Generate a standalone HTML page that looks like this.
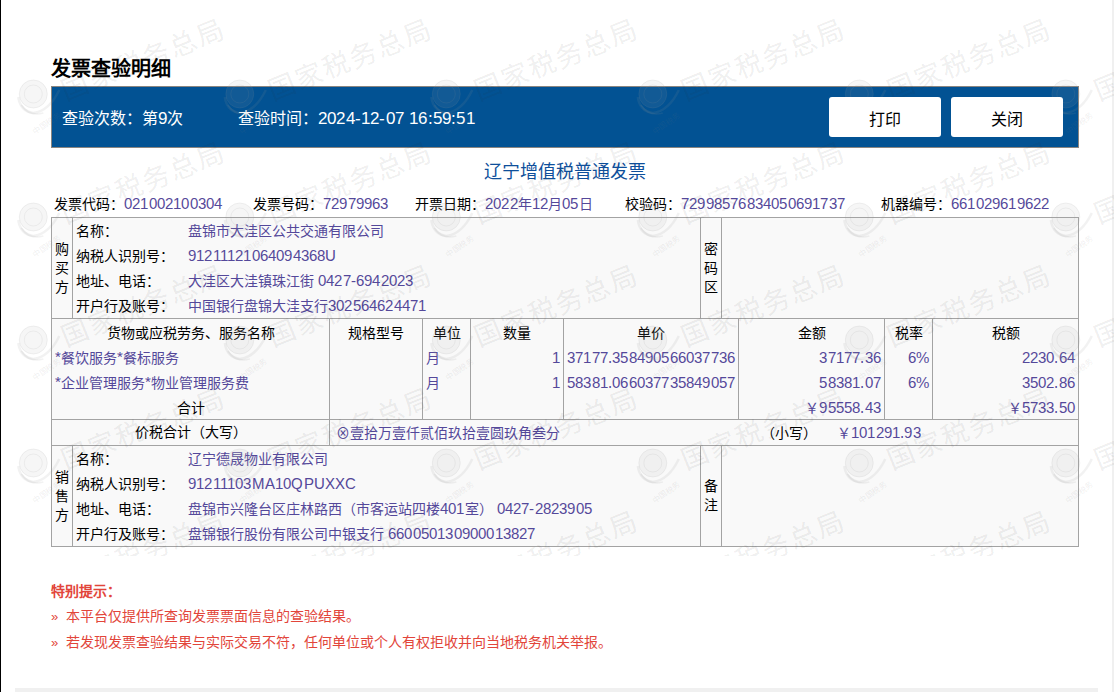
<!DOCTYPE html>
<html lang="zh-CN"><head><meta charset="utf-8">
<style>
@font-face{font-family:"LS";src:local("Liberation Sans");unicode-range:U+0020-007E,U+00A0-00BF;size-adjust:105%}
@font-face{font-family:"LS";font-weight:bold;src:local("Liberation Sans Bold");unicode-range:U+0020-007E,U+00A0-00BF;size-adjust:105%}
*{box-sizing:border-box}
html,body{margin:0;padding:0;width:1114px;height:692px;overflow:hidden;background:#fff;font-family:"LS","Liberation Sans",sans-serif;color:#333}
.abs{position:absolute}
#lline{left:0;top:0;width:1px;height:692px;background:#000}
#rstrip{left:1112px;top:0;width:2px;height:692px;background:#f0f0f0}
#bstrip{left:15px;top:688px;width:1083px;height:4px;background:#f0f0f0}
#title{left:51px;top:55px;font-size:20px;font-weight:bold;color:#000;line-height:28px;white-space:nowrap}
#bar{left:51px;top:86px;width:1028px;height:62px;background:#025293;border:1px solid #8a8580}
.bt{color:#fff;font-size:16px;line-height:20px;top:22px;white-space:nowrap}
.btn{z-index:2;top:10px;width:112px;height:40px;background:#fff;border-radius:3px;color:#000;font-size:16px;line-height:45px;text-align:center}
#ititle{left:51px;top:160px;width:1028px;text-align:center;font-size:18px;line-height:24px;color:#0e4f9b}
.info{top:195px;font-size:14px;line-height:18px;white-space:nowrap;color:#000}
.v{color:#54489a}
.n{letter-spacing:0.2px}
table{position:absolute;left:51px;border-collapse:collapse;table-layout:fixed;background:#f9f9f9;font-size:14px;color:#000}
td{border:1px solid #a3a3a3;padding:0;white-space:nowrap;vertical-align:top}
.vt{text-align:center;line-height:19px;vertical-align:middle;white-space:normal;word-break:break-all}
.row{height:25px;line-height:25px;padding-left:3px}
.r{text-align:right;padding-right:3px}
.c{text-align:center;padding-left:0}
.g .row{position:relative;top:2px}
.p .row{position:relative;top:1px}
.t .row{top:1px}
#notes{left:51px;top:579px;font-size:14px;color:#e2453a;line-height:25px;white-space:nowrap}
</style></head><body>
<div id="lline" class="abs"></div>
<div id="rstrip" class="abs"></div>
<div id="bstrip" class="abs"></div>
<div id="title" class="abs">发票查验明细</div>
<div id="bar" class="abs">
  <div class="abs bt" style="left:10px">查验次数：第<span class="n">9</span>次</div>
  <div class="abs bt" style="left:186px">查验时间：<span class="n">2024-12-07 16:59:51</span></div>
  <div class="abs btn" style="left:777px">打印</div>
  <div class="abs btn" style="left:899px">关闭</div>
</div>
<div id="ititle" class="abs">辽宁增值税普通发票</div>
<div class="abs info" style="left:54px">发票代码：<span class="v"><span class="n">021002100304</span></span></div>
<div class="abs info" style="left:253px">发票号码：<span class="v"><span class="n">72979963</span></span></div>
<div class="abs info" style="left:415px">开票日期：<span class="v"><span class="n">2022</span>年<span class="n">12</span>月<span class="n">05</span>日</span></div>
<div class="abs info" style="left:625px">校验码：<span class="v"><span class="n">72998576834050691737</span></span></div>
<div class="abs info" style="left:881px">机器编号：<span class="v"><span class="n">661029619622</span></span></div>

<!-- buyer -->
<table class="p" style="top:217px;width:1027px">
<colgroup><col style="width:21px"><col style="width:628px"><col style="width:21px"><col style="width:357px"></colgroup>
<tr style="height:101px">
<td class="vt">购买方</td>
<td style="vertical-align:middle">
 <div class="row"><span style="display:inline-block;width:112px">名称：</span><span class="v">盘锦市大洼区公共交通有限公司</span></div>
 <div class="row"><span style="display:inline-block;width:112px">纳税人识别号：</span><span class="v"><span class="n">91211121064094368U</span></span></div>
 <div class="row"><span style="display:inline-block;width:112px">地址、电话：</span><span class="v">大洼区大洼镇珠江街 <span class="n">0427-6942023</span></span></div>
 <div class="row"><span style="display:inline-block;width:112px">开户行及账号：</span><span class="v">中国银行盘锦大洼支行<span class="n">302564624471</span></span></div>
</td>
<td class="vt">密码区</td>
<td></td>
</tr></table>

<!-- goods -->
<table class="g" style="top:318px;width:1027px">
<colgroup><col style="width:278px"><col style="width:93px"><col style="width:48px"><col style="width:93px"><col style="width:175px"><col style="width:146px"><col style="width:48px"><col style="width:146px"></colgroup>
<tr style="height:101px">
<td><div class="row c">货物或应税劳务、服务名称</div><div class="row v">*餐饮服务*餐标服务</div><div class="row v">*企业管理服务*物业管理服务费</div><div class="row c">合计</div></td>
<td><div class="row c">规格型号</div></td>
<td><div class="row c">单位</div><div class="row v">月</div><div class="row v">月</div></td>
<td><div class="row c">数量</div><div class="row r v"><span class="n">1</span></div><div class="row r v"><span class="n">1</span></div></td>
<td><div class="row c">单价</div><div class="row v"><span class="n">37177.358490566037736</span></div><div class="row v"><span class="n">58381.066037735849057</span></div></td>
<td><div class="row c">金额</div><div class="row r v"><span class="n">37177.36</span></div><div class="row r v"><span class="n">58381.07</span></div><div class="row r v">￥<span class="n">95558.43</span></div></td>
<td><div class="row c">税率</div><div class="row r v"><span class="n">6%</span></div><div class="row r v"><span class="n">6%</span></div></td>
<td><div class="row c">税额</div><div class="row r v"><span class="n">2230.64</span></div><div class="row r v"><span class="n">3502.86</span></div><div class="row r v">￥<span class="n">5733.50</span></div></td>
</tr></table>

<!-- total -->
<table class="t" style="top:419px;width:1027px">
<colgroup><col style="width:278px"><col style="width:749px"></colgroup>
<tr style="height:26px">
<td><div class="row c" style="height:25px">价税合计（大写）</div></td>
<td><div class="row" style="position:relative;height:25px;padding-left:6px"><span class="v">⊗壹拾万壹仟贰佰玖拾壹圆玖角叁分</span><span style="position:absolute;left:431px">（小写）</span><span class="v" style="position:absolute;left:507px">￥<span class="n">101291.93</span></span></div></td>
</tr></table>

<!-- seller -->
<table class="p" style="top:445px;width:1027px">
<colgroup><col style="width:21px"><col style="width:628px"><col style="width:21px"><col style="width:357px"></colgroup>
<tr style="height:101px">
<td class="vt">销售方</td>
<td style="vertical-align:middle">
 <div class="row"><span style="display:inline-block;width:112px">名称：</span><span class="v">辽宁德晟物业有限公司</span></div>
 <div class="row"><span style="display:inline-block;width:112px">纳税人识别号：</span><span class="v"><span class="n">91211103MA10QPUXXC</span></span></div>
 <div class="row"><span style="display:inline-block;width:112px">地址、电话：</span><span class="v">盘锦市兴隆台区庄林路西（市客运站四楼<span class="n">401</span>室） <span class="n">0427-2823905</span></span></div>
 <div class="row"><span style="display:inline-block;width:112px">开户行及账号：</span><span class="v">盘锦银行股份有限公司中银支行 <span class="n">660050130900013827</span></span></div>
</td>
<td class="vt">备注</td>
<td></td>
</tr></table>

<svg class="abs" id="wm" width="1114" height="556" style="left:0;top:0;pointer-events:none">
<defs><g id="tl">
 <g fill="none" stroke="rgba(150,150,150,0.12)" transform="translate(0,0)">
  <circle cx="0" cy="-1" r="14" fill="rgba(170,170,170,0.10)" stroke-width="1"/>
  <circle cx="0" cy="-1" r="9" stroke-width="1"/>
  <path d="M-15,2 Q-13,16 0,18 Q16,16 26,-5" stroke-width="2.5"/>
  <path d="M-12,10 Q-4,22 10,18" stroke-width="1.5"/>
 </g>
 <text transform="translate(41.5,-8) rotate(-22)" font-size="27" font-weight="300" letter-spacing="2.2" fill="rgba(40,40,40,0.085)" dominant-baseline="central" x="-13.5">国家税务总局</text>
</g>
<g id="st"><text transform="translate(2,40) rotate(-35)" font-size="8" fill="rgba(120,120,120,0.12)">中国税务</text></g></defs>
<use href="#tl" x="33.3" y="-28.0"/>
<use href="#tl" x="239.8" y="-28.0"/>
<use href="#tl" x="446.3" y="-28.0"/>
<use href="#tl" x="652.8" y="-28.0"/>
<use href="#tl" x="859.3" y="-28.0"/>
<use href="#tl" x="1065.8" y="-28.0"/>
<use href="#tl" x="33.3" y="95.0"/>
<use href="#tl" x="239.8" y="95.0"/>
<use href="#tl" x="446.3" y="95.0"/>
<use href="#tl" x="652.8" y="95.0"/>
<use href="#tl" x="859.3" y="95.0"/>
<use href="#tl" x="1065.8" y="95.0"/>
<use href="#tl" x="33.3" y="218.0"/>
<use href="#tl" x="239.8" y="218.0"/>
<use href="#tl" x="446.3" y="218.0"/>
<use href="#tl" x="652.8" y="218.0"/>
<use href="#tl" x="859.3" y="218.0"/>
<use href="#tl" x="1065.8" y="218.0"/>
<use href="#tl" x="33.3" y="341.0"/>
<use href="#tl" x="239.8" y="341.0"/>
<use href="#tl" x="446.3" y="341.0"/>
<use href="#tl" x="652.8" y="341.0"/>
<use href="#tl" x="859.3" y="341.0"/>
<use href="#tl" x="1065.8" y="341.0"/>
<use href="#tl" x="33.3" y="464.0"/>
<use href="#tl" x="239.8" y="464.0"/>
<use href="#tl" x="446.3" y="464.0"/>
<use href="#tl" x="652.8" y="464.0"/>
<use href="#tl" x="859.3" y="464.0"/>
<use href="#tl" x="1065.8" y="464.0"/>
<use href="#tl" x="33.3" y="587.0"/>
<use href="#tl" x="239.8" y="587.0"/>
<use href="#tl" x="446.3" y="587.0"/>
<use href="#tl" x="652.8" y="587.0"/>
<use href="#tl" x="859.3" y="587.0"/>
<use href="#tl" x="1065.8" y="587.0"/>
<use href="#st" x="33.3" y="95.0"/>
<use href="#st" x="239.8" y="95.0"/>
<use href="#st" x="446.3" y="95.0"/>
<use href="#st" x="652.8" y="95.0"/>
<use href="#st" x="859.3" y="95.0"/>
<use href="#st" x="1065.8" y="95.0"/>
<use href="#st" x="33.3" y="218.0"/>
<use href="#st" x="239.8" y="218.0"/>
<use href="#st" x="446.3" y="218.0"/>
<use href="#st" x="652.8" y="218.0"/>
<use href="#st" x="859.3" y="218.0"/>
<use href="#st" x="1065.8" y="218.0"/>
<use href="#st" x="33.3" y="341.0"/>
<use href="#st" x="239.8" y="341.0"/>
<use href="#st" x="446.3" y="341.0"/>
<use href="#st" x="652.8" y="341.0"/>
<use href="#st" x="859.3" y="341.0"/>
<use href="#st" x="1065.8" y="341.0"/>
<use href="#st" x="33.3" y="464.0"/>
<use href="#st" x="239.8" y="464.0"/>
<use href="#st" x="446.3" y="464.0"/>
<use href="#st" x="652.8" y="464.0"/>
<use href="#st" x="859.3" y="464.0"/>
<use href="#st" x="1065.8" y="464.0"/>
<use href="#st" x="33.3" y="587.0"/>
<use href="#st" x="239.8" y="587.0"/>
<use href="#st" x="446.3" y="587.0"/>
<use href="#st" x="652.8" y="587.0"/>
<use href="#st" x="859.3" y="587.0"/>
<use href="#st" x="1065.8" y="587.0"/>
</svg>
<div id="notes" class="abs">
<div style="font-weight:bold">特别提示：</div>
<div><span style="font-size:12px">»</span>&nbsp; 本平台仅提供所查询发票票面信息的查验结果。</div>
<div><span style="font-size:12px">»</span>&nbsp; 若发现发票查验结果与实际交易不符，任何单位或个人有权拒收并向当地税务机关举报。</div>
</div>
</body></html>
